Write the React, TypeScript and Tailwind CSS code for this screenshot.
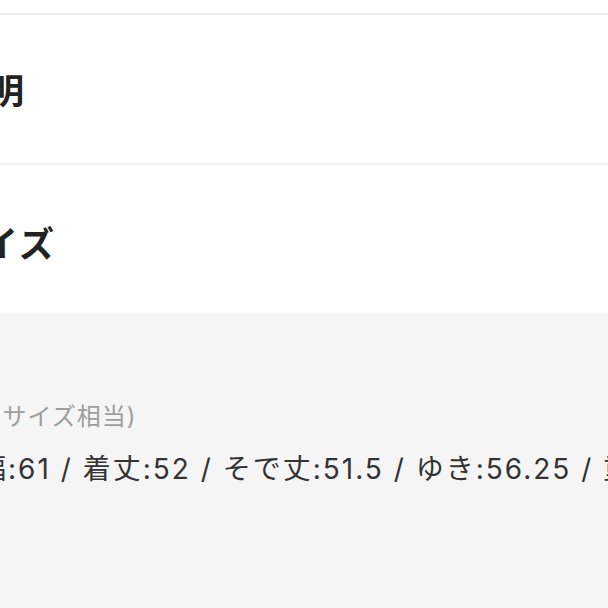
import React from "react";

export default function App() {
  return (
    <div className="w-[608px] h-[608px] overflow-hidden bg-white flex flex-col" style={{ fontFamily: 'Inter, "Noto Sans CJK JP", sans-serif' }}>
      <div className="h-[13px] bg-white shrink-0" />
      <section className="h-[150px] shrink-0 border-t-[2px] border-[#efefef] flex items-center">
        <h2 className="-ml-[159px] text-[35px] leading-[40px] font-bold text-[#222] tracking-[2px] whitespace-nowrap" style={{ fontFamily: '"Noto Sans CJK JP", sans-serif' }}>
          商品の説明
        </h2>
      </section>
      <section className="h-[151px] shrink-0 border-t-[2px] border-[#efefef] flex items-center pt-[4px]">
        <h2 className="-ml-[54px] text-[35px] leading-[40px] font-bold text-[#222] tracking-[2px] whitespace-nowrap" style={{ fontFamily: '"Noto Sans CJK JP", sans-serif' }}>
          サイズ
        </h2>
      </section>
      <section className="flex-1 bg-[#f5f5f5] border-t border-[#f0f0f0] pt-[89px]">
        <p className="-ml-[30px] text-[24px] leading-[26px] text-[#9e9e9e] tracking-[1px] whitespace-nowrap">
          (Mサイズ相当)
        </p>
        <p className="-ml-[52px] mt-[23px] text-[28px] leading-[32px] text-[#333] tracking-[2px] whitespace-nowrap">
          身幅:61 / 着丈:52 / そで丈:51.5 / ゆき:56.25 / 重量:約450g
        </p>
      </section>
    </div>
  );
}
